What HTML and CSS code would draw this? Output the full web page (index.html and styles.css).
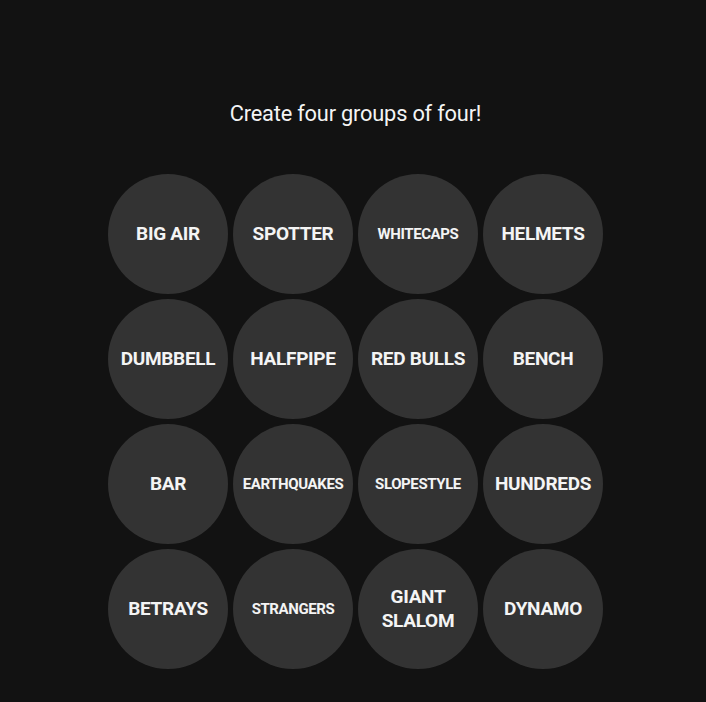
FILE: index.html
```html
<!DOCTYPE html>
<html>
	<head>
		<meta charset="utf-8">
		<title>Connections</title>
		<link rel="stylesheet" href="styles.css">
	</head>
	<body>
		<div class="game">
			<p class="prompt">Create four groups of four!</p>
			<ul class="board">
				<li class="card">BIG AIR</li>
				<li class="card">SPOTTER</li>
				<li class="card small">WHITECAPS</li>
				<li class="card">HELMETS</li>
				<li class="card">DUMBBELL</li>
				<li class="card">HALFPIPE</li>
				<li class="card">RED BULLS</li>
				<li class="card">BENCH</li>
				<li class="card">BAR</li>
				<li class="card small">EARTHQUAKES</li>
				<li class="card small">SLOPESTYLE</li>
				<li class="card">HUNDREDS</li>
				<li class="card">BETRAYS</li>
				<li class="card small">STRANGERS</li>
				<li class="card">GIANT SLALOM</li>
				<li class="card">DYNAMO</li>
			</ul>
		</div>
	</body>
</html>
```

FILE: styles.css
```css
* {
	margin: 0;
	padding: 0;
}

ul {
	list-style: none;
}

body {
	background-color: #121212;
	color: #f4f4f4;
	font-family: Roboto, "Liberation Sans", sans-serif;
}

.game {
	display: flex;
	flex-direction: column;
	align-items: center;
	padding: 99px 0 0 5px;
}

.prompt {
	font-size: 21.8px;
	line-height: 30px;
	letter-spacing: -0.2px;
}

.board {
	display: grid;
	grid-template-columns: repeat(4, 120px);
	grid-auto-rows: 120px;
	gap: 5px;
	margin-top: 45px;
}

.board .card {
	display: flex;
	align-items: center;
	justify-content: center;
	text-align: center;
	background-color: #333333;
	border-radius: 50%;
	font-size: 19px;
	font-weight: 700;
	line-height: 24px;
	letter-spacing: -0.3px;
	padding: 0 6px;
}

.board .card.small {
	font-size: 15px;
	letter-spacing: -0.4px;
	padding: 0;
}
```
